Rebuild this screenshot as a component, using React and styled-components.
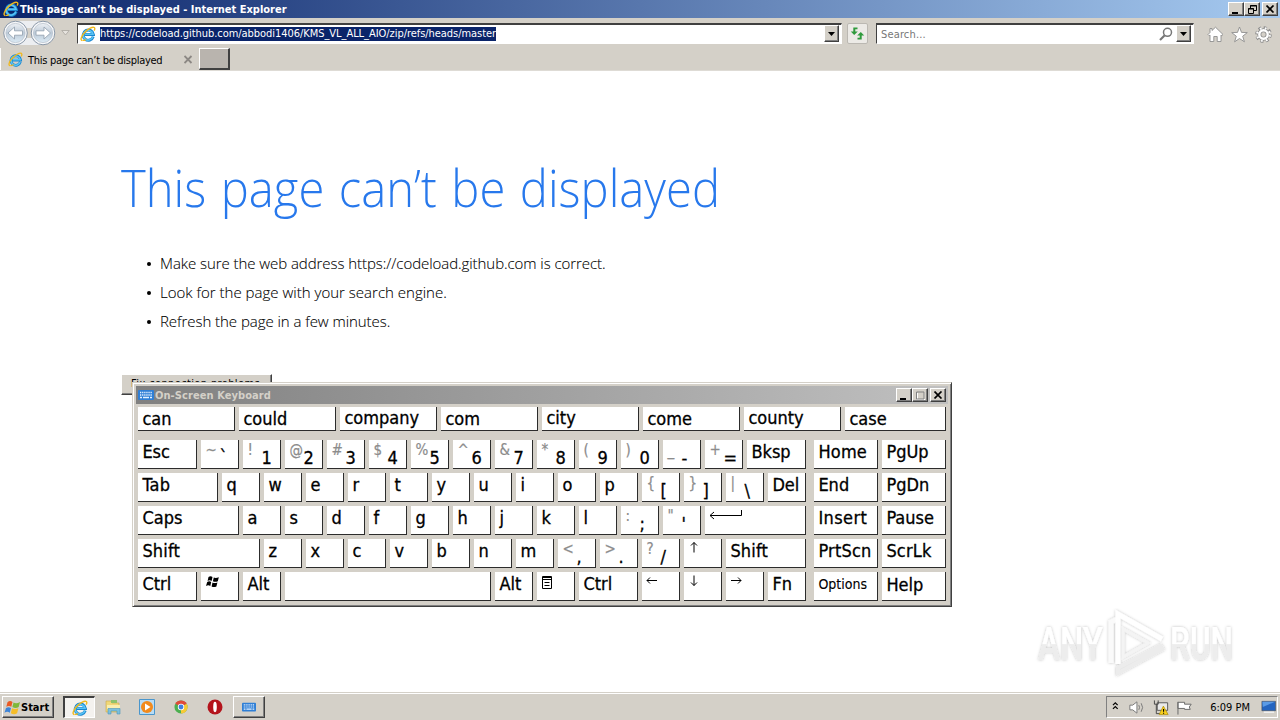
import styled, { createGlobalStyle, css } from "styled-components"

const Global = createGlobalStyle`
  * {
    box-sizing: border-box;
  }

  body {
    margin: 0;
    background: #fff;
    overflow: hidden;
  }
`

const ui = '"DejaVu Sans Condensed", "DejaVu Sans", sans-serif'
const face = "#d4d0c8"

const raised = css`
  background: ${face};
  border: 1px solid;
  border-color: #fff #404040 #404040 #fff;
  box-shadow: inset -1px -1px 0 #808080;
`

const Desktop = styled.div`
  display: flex;
  flex-direction: column;
  width: 1280px;
  height: 720px;
  overflow: hidden;
  font-family: ${ui};
  font-size: 11px;
  color: #000;
`

const TitleBar = styled.div`
  display: flex;
  align-items: center;
  height: 18px;
  padding: 0 2px 0 3px;
  background: linear-gradient(to right, #0a246a, #a6caf0);
`

const TitleText = styled.span`
  flex: 1;
  padding-top: 1px;
  margin-left: ${(p) => p.$gap}px;
  font-weight: 700;
  line-height: 18px;
  white-space: pre;
  color: ${(p) => p.$color};
  letter-spacing: ${(p) => p.$spacing || 0}px;
`

const CaptionButton = styled.div`
  ${raised}
  display: flex;
  align-items: center;
  justify-content: center;
  width: 16px;
  height: 14px;
  margin-left: ${(p) => (p.$apart ? 2 : 0)}px;
`

const NavBar = styled.div`
  display: flex;
  align-items: center;
  height: 30px;
  padding: 0 8px 0 2px;
  background: ${face};
`

const NavButtons = styled.div`
  display: flex;
  width: 54px;
  height: 26px;
`

const HistoryArrow = styled.svg`
  margin: 0 7px 0 5px;
`

const Field = styled.div`
  display: flex;
  align-items: center;
  width: ${(p) => p.$width}px;
  height: 21px;
  padding: 0 2px;
  background: #fff;
  border: 1px solid;
  border-top: 2px solid #404040;
  border-color: #404040 #fff #fff #404040;
`

const Url = styled.span`
  height: 14px;
  margin-left: 4px;
  line-height: 14px;
  letter-spacing: -0.05px;
  white-space: pre;
  color: #fff;
  background: #0a246a;
`

const Placeholder = styled.span`
  flex: 1;
  padding: 1px 0 0 2px;
  color: #777;
  letter-spacing: 0.15px;
`

const Spacer = styled.span`
  flex: 1;
`

const DropButton = styled.div`
  ${raised}
  display: flex;
  align-items: center;
  justify-content: center;
  width: 15px;
  height: 17px;
  margin-left: ${(p) => p.$gap || 0}px;
`

const RefreshButton = styled.div`
  display: flex;
  align-items: center;
  justify-content: center;
  width: 21px;
  height: 21px;
  margin: 0 8px 0 5px;
  background: #eceae6;
  border: 1px solid #bbb8b2;
  border-radius: 2px;
`

const Tools = styled.div`
  display: flex;
  gap: 7px;
  margin: 3px 0 0 13px;
`

const TabBar = styled.div`
  display: flex;
  height: 23px;
  background: ${face};
  border-bottom: 1px solid #dedbd5;
`

const Tab = styled.div`
  display: flex;
  align-items: center;
  width: 199px;
  padding: 1px 6px 0 7px;
  border-left: 1px solid #fff;
`

const TabText = styled.span`
  flex: 1;
  margin-left: 5px;
  padding-top: 1px;
  letter-spacing: -0.28px;
  white-space: pre;
`

const NewTab = styled.div`
  width: 31px;
  height: 22px;
  background: #b9b4ae;
  border: 1px solid;
  border-width: 1px 2px 2px 1px;
  border-color: #fff #404040 #404040 #fff;
`

const Page = styled.main`
  flex: 1;
  display: flex;
  flex-direction: column;
  align-items: flex-start;
  padding: 86px 0 0 121px;
  background: #fff;
`

const Heading = styled.h1`
  margin: 0;
  font: 300 51px/60px "Open Sans", sans-serif;
  color: #2778ec;
  white-space: pre;
  word-spacing: 2.5px;
  transform: scaleX(0.925);
  transform-origin: 0 0;
`

const Hints = styled.ul`
  margin: 32px 0 0;
  padding: 0 0 0 39px;
  list-style: none;
  font: 300 15px/29px "Open Sans", sans-serif;
  color: #000;
  -webkit-text-stroke: 0.1px #000;
`

const Hint = styled.li`
  display: flex;
  align-items: center;
  letter-spacing: ${(p) => p.$spacing}px;

  &::before {
    content: "";
    width: 4px;
    height: 4px;
    margin: 0 9px 0 -13px;
    border-radius: 2px;
    background: #000;
  }
`

const FixButton = styled.button`
  ${raised}
  width: 151px;
  height: 21px;
  margin-top: 38px;
  padding: 0 2px 3px 0;
  font: 11px ${ui};
  letter-spacing: 0.37px;
`

const Keyboard = styled.section`
  position: absolute;
  left: 132px;
  top: 382px;
  width: 820px;
  height: 225px;
  padding: 2px;
  background: ${face};
  border: 1px solid;
  border-color: ${face} #404040 #404040 ${face};
  box-shadow: inset 1px 1px 0 #fff, inset -1px -1px 0 #808080;
`

const KeyboardTitle = styled.div`
  display: flex;
  align-items: center;
  height: 18px;
  margin: 1px;
  padding: 0 2px;
  background: linear-gradient(to right, #808080, #c0c0c0);
`

const Rows = styled.div`
  display: flex;
  flex-direction: column;
  gap: 4px;
  padding: 2px 3px;
`

const KeyRow = styled.div`
  display: flex;
  gap: 4px;
  height: ${(p) => p.$height || 29}px;
  margin-bottom: ${(p) => p.$after || 0}px;
`

const KeyCap = styled.div`
  display: flex;
  width: ${(p) => p.$width}px;
  margin-left: ${(p) => p.$gap || 0}px;
  padding: ${(p) => p.$drop || 0}px 0 0 4.4px;
  background: #fff;
  border-right: 1px solid #2c2c2c;
  border-bottom: 1px solid #2c2c2c;
  font-size: ${(p) => p.$size || 18}px;
  line-height: 24px;
  letter-spacing: ${(p) => p.$spacing || 0}px;
  white-space: pre;
  -webkit-text-stroke: ${(p) => (p.$size ? 0.1 : 0.3)}px #000;
`

const Shifted = styled.span`
  width: 14px;
  font-size: 15px;
  line-height: 20px;
  color: #8c8c8c;
  -webkit-text-stroke: 0.2px #8c8c8c;
`

const Base = styled.span`
  margin-top: ${(p) => p.$drop}px;
`

const Watermark = styled.svg`
  position: absolute;
  left: 1030px;
  top: 604px;
  overflow: visible;
`

const Taskbar = styled.footer`
  display: flex;
  align-items: center;
  height: 28px;
  padding: 3px 2px 2px;
  background: ${face};
  border-top: 1px solid ${face};
  box-shadow: inset 0 1px 0 #fff;
`

const StartButton = styled.div`
  ${raised}
  display: flex;
  align-items: center;
  width: 52px;
  height: 22px;
  padding-left: 1px;
  font-weight: 700;
`

const TaskButton = styled.div`
  display: flex;
  align-items: center;
  justify-content: center;
  width: 32px;
  height: 22px;
  margin-left: ${(p) => p.$gap || 2}px;
  ${(p) => p.$look === "raised" && raised}
  ${(p) =>
    p.$look === "pressed" &&
    css`
      background: #f4f2ef;
      border: 1px solid;
      border-width: 2px 1px 1px 2px;
      border-color: #404040 #fff #fff #404040;
    `}
`

const Tray = styled.div`
  display: flex;
  align-items: center;
  width: 172px;
  height: 22px;
  padding-left: 5px;
  border: 1px solid;
  border-color: #808080 #fff #fff #808080;
`

const Clock = styled.span`
  margin: 0 10px 0 16px;
  white-space: pre;
`

function IeLogo({ size = 16 }) {
  return (
    <svg width={size} height={size} viewBox="0 0 16 16" fill="none">
      <path d="M13.2 10.6A5.1 5.1 0 1 1 13.4 8.6H4.4" stroke="#1b86cf" strokeWidth="3" />
      <path d="M12.9 10.6A4.9 4.9 0 1 1 13 8.2H5" stroke="#58c4f5" strokeWidth="1.6" />
      <path
        d="M2.2 14.6C.2 14.2 1 10.8 4 7.2 7.5 3.1 12.6.4 14.3 1.5c.8.6.5 1.9-.2 3.2"
        stroke="#f0b81c"
        strokeWidth="1.4"
      />
      <path d="M2.5 14.4c1 .3 2.3-.2 3.5-1" stroke="#f0b81c" strokeWidth="1.2" />
    </svg>
  )
}

function KeyboardIcon({ width = 16 }) {
  return (
    <svg width={width} height="10" viewBox="0 0 16 10">
      <rect width="16" height="10" rx="1" fill="#2f7fd6" />
      <path d="M2 2.5h12M2 5h12" stroke="#e4f1ff" strokeWidth="1.3" strokeDasharray="1.3 .8" />
      <path d="M2 7.5h2m1 0h6m1 0h2" stroke="#e4f1ff" strokeWidth="1.3" />
    </svg>
  )
}

function MinimizeGlyph() {
  return (
    <svg width="10" height="9" viewBox="0 0 10 9">
      <path d="M1 7h6v2H1z" />
    </svg>
  )
}

function CloseGlyph() {
  return (
    <svg width="9" height="8" viewBox="0 0 9 8">
      <path d="M.5.5l7 7M7.5.5l-7 7" stroke="#000" strokeWidth="1.7" />
    </svg>
  )
}

function DownGlyph() {
  return (
    <svg width="7" height="4" viewBox="0 0 7 4">
      <path d="M0 0h7L3.5 4z" />
    </svg>
  )
}

function ArrowGlyph({ turn }) {
  return (
    <svg width="12" height="16" viewBox="0 0 12 16" fill="none" stroke="#000">
      <path d="M1 8.5h10M4 5.5L1 8.5 4 11.5" transform={`rotate(${turn} 6 8.5)`} />
    </svg>
  )
}

function NavArrow({ x, flip }) {
  return (
    <g transform={`translate(${x} 13)`}>
      <circle r="11.8" fill="#f7f8fa" stroke="#8a98a8" />
      <circle r="9.6" fill="url(#nav)" stroke="#b5bfca" strokeWidth=".7" />
      <path
        d="M-7.5 0L-1-6V-2.2H7v4.4H-1V6z"
        transform={flip ? "scale(-1 1)" : undefined}
        fill="#fff"
        stroke="#97a5b3"
        strokeWidth=".9"
      />
    </g>
  )
}

const predictions = ["can", "could", "company", "com", "city", "come", "county", "case"]

const glyphs = {
  enter: (
    <svg width="34" height="15" viewBox="0 0 34 15" fill="none" stroke="#000">
      <path d="M32.5 4v5.5H1M5 6L1 9.5 5 13" />
    </svg>
  ),
  win: (
    <svg width="16" height="18" viewBox="0 0 16 18">
      <path d="M3.5 5q2-1.5 4 0L6.6 9q-2-1.3-4 0zM8.8 5.5q2 1 5-.3l-1 4q-2.6 1.1-4.9 0zM2.2 10q2-1.3 4 0l-.9 4q-2-1.3-4.3 0zM7.5 10.5q2 1 4.9 0l-1 4q-2.6 1-4.8 0z" />
    </svg>
  ),
  menu: (
    <svg width="12" height="17" viewBox="0 0 12 17" fill="none" stroke="#000">
      <path d="M1.5 4.5h9v12h-9zM1 5.5h10M1 7.5h10M3.5 10.5h5M3.5 13.5h5" />
    </svg>
  ),
  left: <ArrowGlyph turn={0} />,
  up: <ArrowGlyph turn={90} />,
  right: <ArrowGlyph turn={180} />,
  down: <ArrowGlyph turn={270} />,
}

// t: label, up: shifted character, w: key width, ls: letter spacing
const rows = [
  [
    { t: "Esc", w: 59 },
    { t: "`", up: "~", drop: 5 },
    { t: "1", up: "!" },
    { t: "2", up: "@" },
    { t: "3", up: "#" },
    { t: "4", up: "$" },
    { t: "5", up: "%" },
    { t: "6", up: "^" },
    { t: "7", up: "&" },
    { t: "8", up: "*" },
    { t: "9", up: "(" },
    { t: "0", up: ")" },
    { t: "-", up: "_" },
    { t: "=", up: "+" },
    { t: "Bksp", w: 59 },
    { t: "Home", w: 64, gap: 4, ls: 0.2 },
    { t: "PgUp", w: 64 },
  ],
  [
    { t: "Tab", w: 80, ls: 0.3 },
    ..."qwertyuiop".split("").map((t) => ({ t })),
    { t: "[", up: "{" },
    { t: "]", up: "}" },
    { t: "\\", up: "|" },
    { t: "Del" },
    { t: "End", w: 64, gap: 4 },
    { t: "PgDn", w: 64 },
  ],
  [
    { t: "Caps", w: 101 },
    ..."asdfghjkl".split("").map((t) => ({ t })),
    { t: ";", up: ":" },
    { t: "'", up: "\"" },
    { icon: "enter", w: 101 },
    { t: "Insert", w: 64, gap: 4, ls: 0.4 },
    { t: "Pause", w: 64 },
  ],
  [
    { t: "Shift", w: 122, ls: 0.2 },
    ..."zxcvbnm".split("").map((t) => ({ t })),
    { t: ",", up: "<" },
    { t: ".", up: ">" },
    { t: "/", up: "?" },
    { icon: "up" },
    { t: "Shift", w: 80, ls: 0.2 },
    { t: "PrtScn", w: 64, gap: 4, ls: 0.2 },
    { t: "ScrLk", w: 64, ls: 0.2 },
  ],
  [
    { t: "Ctrl", w: 59 },
    { icon: "win" },
    { t: "Alt" },
    { w: 206 },
    { t: "Alt" },
    { icon: "menu" },
    { t: "Ctrl", w: 59 },
    { icon: "left" },
    { icon: "down" },
    { icon: "right" },
    { t: "Fn" },
    { t: "Options", w: 64, gap: 4, size: 14 },
    { t: "Help", w: 64, low: 1 },
  ],
]

function Key({ k }) {
  return (
    <KeyCap $width={k.w || 38} $gap={k.gap} $size={k.size} $spacing={k.ls} $drop={k.low}>
      {k.up && <Shifted>{k.up}</Shifted>}
      {k.up ? <Base $drop={k.drop ?? 6}>{k.t}</Base> : k.t}
      {k.icon && glyphs[k.icon]}
    </KeyCap>
  )
}

function OnScreenKeyboard() {
  return (
    <Keyboard>
      <KeyboardTitle>
        <KeyboardIcon />
        <TitleText $gap={1} $color={face} $spacing={0.08}>
          On-Screen Keyboard
        </TitleText>
        <CaptionButton>
          <MinimizeGlyph />
        </CaptionButton>
        <CaptionButton>
          <svg width="9" height="9" viewBox="0 0 9 9" fill="none">
            <path d="M1.5 2v7M1 8.5h8V1" stroke="#fff" />
            <path d="M.5 1h7.5v7H.5z" stroke="#808080" />
          </svg>
        </CaptionButton>
        <CaptionButton $apart>
          <CloseGlyph />
        </CaptionButton>
      </KeyboardTitle>
      <Rows>
        <KeyRow $height={24} $after={5}>
          {predictions.map((word, i) => (
            <KeyCap key={word} $width={i === 7 ? 101 : 97}>
              <Base $drop={word.includes("y") ? -1 : 0}>{word}</Base>
            </KeyCap>
          ))}
        </KeyRow>
        {rows.map((row, i) => (
          <KeyRow key={i}>
            {row.map((k, j) => (
              <Key key={j} k={k} />
            ))}
          </KeyRow>
        ))}
      </Rows>
    </Keyboard>
  )
}

function AnyRunMark() {
  return (
    <Watermark width="240" height="90" viewBox="0 0 240 90">
      <defs>
        <filter id="soft" x="-10%" y="-10%" width="120%" height="120%">
          <feDropShadow dx="0" dy="0" stdDeviation="1.8" floodColor="#000" floodOpacity=".26" />
        </filter>
        <linearGradient id="fade" x1="0" y1="0" x2="0" y2="1">
          <stop offset=".5" stopColor="#fff" />
          <stop offset=".52" stopColor="#ededed" />
        </linearGradient>
      </defs>
      <g filter="url(#soft)" fill="url(#fade)" fontFamily="Roboto, sans-serif" fontWeight="500" fontSize="47">
        <text x="8" y="56" textLength="65" lengthAdjust="spacingAndGlyphs">
          ANY
        </text>
        <text x="140" y="56" textLength="63" lengthAdjust="spacingAndGlyphs">
          RUN
        </text>
      </g>
      <g filter="url(#soft)" fill="none" strokeWidth="5">
        <path d="M81 59V18l6-3" stroke="#fafafa" />
        <path d="M93 50V25l25 14-25 14z" stroke="#f4f4f4" strokeWidth="3" />
        <path d="M88 60V10l44 25" stroke="#fff" />
        <path d="M132 41L88 64v5l46-25" stroke="#ececec" strokeWidth="4" />
      </g>
    </Watermark>
  )
}

function StartFlag() {
  return (
    <svg width="17" height="17" viewBox="0 0 17 17">
      <path d="M3.5 3.2Q6 1 8.5 3L7.3 7.7q-2.5-1.6-5 .1z" fill="#ea5a24" />
      <path d="M9.5 3.5q3 1.5 6.5-.6l-1.3 5.2q-3 1.8-6.3 0z" fill="#7fb83a" />
      <path d="M2 9q2.5-1.7 5 0l-1.2 4.7q-2.5-1.7-5.3 0z" fill="#3c84d8" />
      <path d="M8 9.3q3 1.6 6.4 0l-1.3 5q-3 1.7-6.3 0z" fill="#f5bd28" />
    </svg>
  )
}

export default function App() {
  return (
    <Desktop>
      <Global />
      <TitleBar>
        <IeLogo />
        <TitleText $gap={1} $color="#fff">
          This page can’t be displayed - Internet Explorer
        </TitleText>
        <CaptionButton>
          <MinimizeGlyph />
        </CaptionButton>
        <CaptionButton>
          <svg width="9" height="9" viewBox="0 0 9 9" fill="none" stroke="#000">
            <path d="M2.5 3.5V.5h6v5H6M2 1h7M.5 3.5h5v5h-5zM0 4h6" />
          </svg>
        </CaptionButton>
        <CaptionButton $apart>
          <CloseGlyph />
        </CaptionButton>
      </TitleBar>

      <NavBar>
        <NavButtons>
          <svg width="54" height="26" viewBox="0 0 54 26">
            <defs>
              <linearGradient id="nav" x1="0" y1="0" x2="0" y2="1">
                <stop offset="0" stopColor="#eef1f5" />
                <stop offset=".5" stopColor="#bccad8" />
                <stop offset="1" stopColor="#dcebf5" />
              </linearGradient>
            </defs>
            <path d="M13 1h28v7H13zM13 18h28v7H13z" fill="#eceef1" />
            <NavArrow x={13.5} />
            <NavArrow x={41} flip />
          </svg>
        </NavButtons>
        <HistoryArrow width="9" height="6" viewBox="0 0 9 6">
          <path d="M.8.5h7.4L4.5 5z" fill="#e6e3de" stroke="#aaa6a0" strokeWidth=".8" />
        </HistoryArrow>
        <Field $width={765}>
          <IeLogo />
          <Url>https://codeload.github.com/abbodi1406/KMS_VL_ALL_AIO/zip/refs/heads/master</Url>
          <Spacer />
          <DropButton>
            <DownGlyph />
          </DropButton>
        </Field>
        <RefreshButton>
          <svg width="15" height="15" viewBox="0 0 15 15" fill="#2f9a3c">
            <path d="M7.5 1.5v1.8H5.3v2.2h2.5L4.2 9 .8 5.5h2.5v-4z" />
            <path d="M7.5 13.500v-1.800h2.200V9.500H7.200L10.800 6l3.400 3.500h-2.500v4z" />
          </svg>
        </RefreshButton>
        <Field $width={318}>
          <Placeholder>Search...</Placeholder>
          <svg width="14" height="14" viewBox="0 0 14 14" fill="none" stroke="#777">
            <circle cx="8.5" cy="5.3" r="4" strokeWidth="1.5" />
            <path d="M5.5 8.500l-4.500 4.500" strokeWidth="2.2" />
          </svg>
          <DropButton $gap={3}>
            <DownGlyph />
          </DropButton>
        </Field>
        <Tools>
          <svg width="17" height="17" viewBox="0 0 17 17" fill="#fff" stroke="#8e8e8e" strokeWidth=".9">
            <path d="M8.5 1.2L16 8.5l-1.2 1.2-.8-.7v6.5h-3.8v-5H6.8v5H3V9l-.8.7L1 8.5l2-2v-4h2v2z" />
          </svg>
          <svg width="17" height="17" viewBox="0 0 17 17" fill="#fff" stroke="#8e8e8e" strokeWidth=".9">
            <path d="M8.5 1l2 5.4 5.8.2-4.6 3.6 1.7 5.6-4.9-3.3-4.9 3.3 1.7-5.6L.7 6.6l5.8-.2z" />
          </svg>
          <svg width="17" height="17" viewBox="0 0 17 17" fill="none">
            <circle cx="8.5" cy="8.5" r="6.7" stroke="#8e8e8e" strokeWidth="3.2" strokeDasharray="3 2.26" />
            <circle cx="8.5" cy="8.5" r="4.2" stroke="#8e8e8e" strokeWidth="4" />
            <circle
              cx="8.5"
              cy="8.5"
              r="6.4"
              stroke="#fff"
              strokeWidth="2.2"
              strokeDasharray="1.7 3.326"
              strokeDashoffset="-.6"
            />
            <circle cx="8.5" cy="8.5" r="4.2" stroke="#fff" strokeWidth="2.4" />
          </svg>
        </Tools>
      </NavBar>

      <TabBar>
        <Tab>
          <IeLogo size={15} />
          <TabText>This page can’t be displayed</TabText>
          <svg width="9" height="9" viewBox="0 0 9 9" stroke="#8c8884" strokeWidth="1.8">
            <path d="M.5 1l7 7M7.5 1l-7 7" />
          </svg>
        </Tab>
        <NewTab />
      </TabBar>

      <Page>
        <Heading>This page can’t be displayed</Heading>
        <Hints>
          <Hint $spacing={-0.06}>
            Make sure the web address https://codeload.github.com is correct.
          </Hint>
          <Hint $spacing={0.01}>Look for the page with your search engine.</Hint>
          <Hint $spacing={-0.05}>Refresh the page in a few minutes.</Hint>
        </Hints>
        <FixButton>Fix connection problems</FixButton>
      </Page>

      <Taskbar>
        <StartButton>
          <StartFlag />
          Start
        </StartButton>
        <TaskButton $gap={9} $look="pressed">
          <IeLogo />
        </TaskButton>
        <TaskButton>
          <svg width="17" height="16" viewBox="0 0 17 16">
            <path d="M1 2h5l1 2h7v9H1z" fill="#f0d878" stroke="#c9a94a" strokeWidth=".6" />
            <path d="M6 1h6v3H6z" fill="#8dc26c" />
            <path d="M2 6h13v4H2z" fill="#f9eeb0" />
            <path d="M3 15V9.5h12V15h-3v-3H6v3z" fill="#7cc0dd" stroke="#4a94b8" strokeWidth=".6" />
          </svg>
        </TaskButton>
        <TaskButton>
          <svg width="16" height="16" viewBox="0 0 16 16">
            <path d="M.5.5h15v15H.5z" fill="#b8dcf5" stroke="#4a96cc" />
            <circle cx="8" cy="8" r="6" fill="#f28a1c" />
            <path d="M6 4.5L11.5 8 6 11.5z" fill="#fff" />
          </svg>
        </TaskButton>
        <TaskButton>
          <svg width="14" height="14" viewBox="0 0 15 15">
            <circle cx="7.5" cy="7.5" r="7" fill="#4caf50" />
            <path d="M7.5 7.5L1.4 4a7 7 0 0 1 12.2 0z" fill="#e04a3a" />
            <path d="M7.5 7.5L13.6 4a7 7 0 0 1-6.1 10.5z" fill="#f7ca35" />
            <circle cx="7.5" cy="7.5" r="3.4" fill="#fff" />
            <circle cx="7.5" cy="7.5" r="2.6" fill="#3f7fe0" />
          </svg>
        </TaskButton>
        <TaskButton>
          <svg width="16" height="16" viewBox="0 0 16 16">
            <circle cx="8" cy="8" r="7.5" fill="#b4141c" />
            <ellipse cx="8" cy="8" rx="1.8" ry="5.2" fill="#fff" />
          </svg>
        </TaskButton>
        <TaskButton $look="raised">
          <KeyboardIcon width={14} />
        </TaskButton>
        <Spacer />
        <Tray>
          <svg width="7" height="13" viewBox="0 0 7 13" fill="none" stroke="#000" strokeWidth="1.3">
            <path d="M1 4l2.5-2.5L6 4M1 8l2.5-2.5L6 8" />
          </svg>
          <svg width="36" height="17" viewBox="0 0 36 17" fill="none" stroke="#777">
            <path d="M11.5 6h3L19 2.5v12L14.5 11h-3z" fill="#fff" />
            <path d="M21 6q1.5 2.5 0 5M23.5 4q3 4.500 0 9" />
          </svg>
          <svg width="17" height="17" viewBox="0 0 17 17" fill="none">
            <path d="M4.5 3.5h11v8h-11z" fill="#e9e9e9" stroke="#555" />
            <path d="M1.5 1v4h4V1M3.5 5v10h4" stroke="#444" />
            <path d="M11 7l5 9H6.5z" fill="#f8cf1c" stroke="#a88700" strokeWidth=".7" />
            <path d="M11.2 10v3M11.2 14v1" stroke="#000" strokeWidth="1.2" />
          </svg>
          <svg width="27" height="17" viewBox="0 0 27 17" fill="#fff" stroke="#666">
            <path d="M9.5 16V2.5M9.5 3h7v2h7l-2 3 1 2.5h-6v-1h-7z" />
          </svg>
          <Clock>6:09 PM</Clock>
          <svg width="18" height="16" viewBox="0 0 18 16">
            <path d="M2 2h14.5v10H2z" fill="#2465c0" stroke="#4a4a4a" strokeWidth=".6" />
            <path d="M2.5 2.5H16L3 8z" fill="#5a9be6" />
            <path d="M4 13.5h11" stroke="#f2f2f2" strokeWidth="1.5" />
          </svg>
        </Tray>
      </Taskbar>

      <OnScreenKeyboard />
      <AnyRunMark />
    </Desktop>
  )
}
